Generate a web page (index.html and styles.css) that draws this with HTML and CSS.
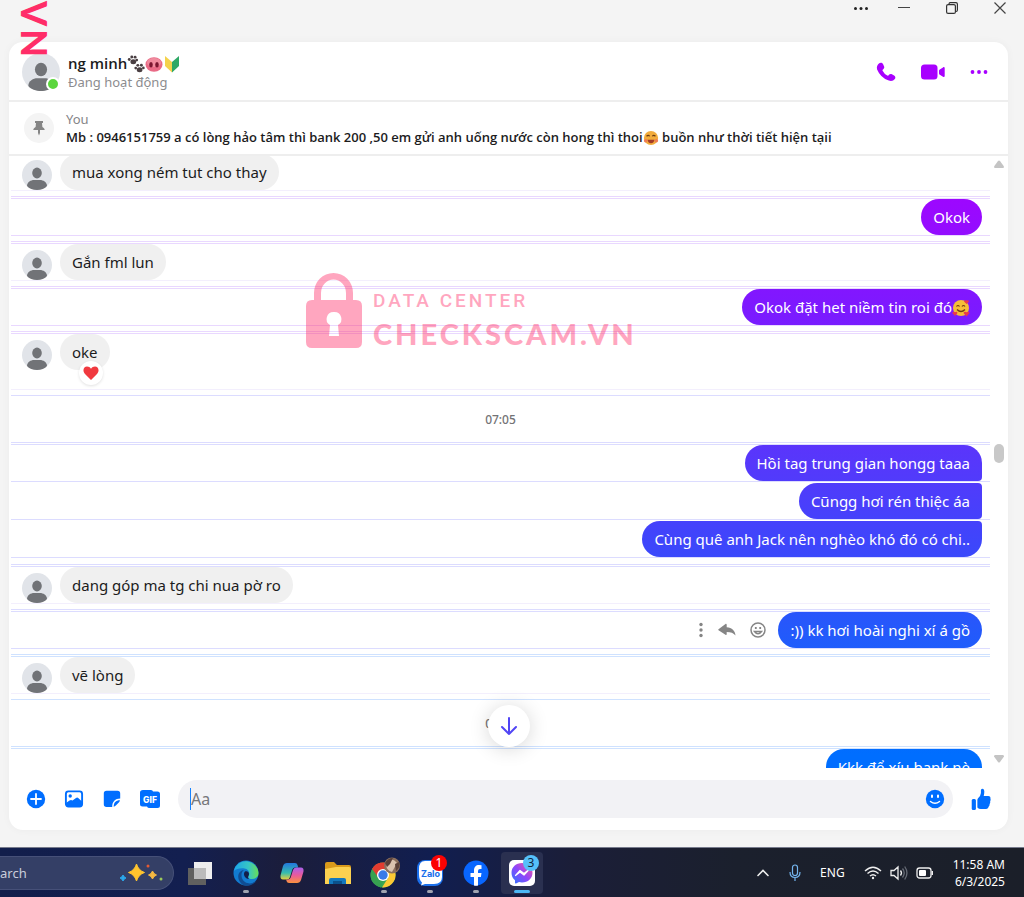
FILE: index.html
```html
<!DOCTYPE html>
<html lang="vi">
<head>
    <meta charset="utf-8">
    <meta name="viewport" content="width=device-width, initial-scale=1.0">
    <title>Messenger</title>
    <link rel="stylesheet" href="styles.css">
</head>
<body>
    <svg class="sprite" aria-hidden="true">
        <symbol id="person" viewBox="0 0 30 30">
            <circle cx="15" cy="15" r="15" fill="#e1e4e9"/>
            <ellipse cx="15" cy="13" rx="4.8" ry="5.4" fill="#717377"/>
            <path d="M5 26c0-4 4-6 7-6h6c3 0 7 2 7 6-2 2.500-6 4-10 4s-8-1.500-10-4z" fill="#717377"/>
        </symbol>
        <symbol id="paw" viewBox="0 0 20 20">
            <g fill="#4a3f42">
                <ellipse cx="7" cy="7.500" rx="3.200" ry="2.800"/><circle cx="2.500" cy="5" r="1.600"/><circle cx="5.300" cy="2.200" r="1.600"/><circle cx="9" cy="2.400" r="1.600"/><circle cx="10.800" cy="5.600" r="1.500"/>
                <ellipse cx="14" cy="16.500" rx="3.200" ry="2.800"/><circle cx="9.700" cy="14.500" r="1.500"/><circle cx="12" cy="11.500" r="1.600"/><circle cx="16" cy="11.400" r="1.600"/><circle cx="18.200" cy="14.400" r="1.500"/>
            </g>
        </symbol>
    </svg>

    <div class="titlebar">
        <button class="menu" aria-label="More"><svg width="16" height="16" viewBox="0 0 16 16" fill="#222"><circle cx="2.500" cy="8.500" r="1.500"/><circle cx="8" cy="8.500" r="1.500"/><circle cx="13.500" cy="8.500" r="1.500"/></svg></button>
        <button aria-label="Minimize"><svg width="12" height="16" viewBox="0 0 12 16" stroke="#444"><path d="M0 7.500h12"/></svg></button>
        <button aria-label="Restore"><svg width="12" height="16" viewBox="0 0 12 16" fill="none" stroke="#333" stroke-width="1.200"><rect x=".6" y="4.600" width="8.800" height="8.800" rx="1.500"/><path d="M3 4.500V4a1.500 1.500 0 0 1 1-1.400h6A1.500 1.500 0 0 1 11.400 4v6a1.500 1.500 0 0 1-1.400 1.500"/></svg></button>
        <button aria-label="Close"><svg width="12" height="16" viewBox="0 0 12 16" stroke="#444" stroke-width="1.200"><path d="M.5 2.500l11 11M11.500 2.500l-11 11"/></svg></button>
    </div>

    <main class="chat">
        <header class="chat-header">
            <div class="contact-avatar">
                <svg width="38" height="38"><use href="#person"/></svg>
                <span class="online"></span>
            </div>
            <div class="contact">
                <h1>ng minh<svg class="emoji" width="18" height="18"><use href="#paw"/></svg><svg class="emoji" width="18" height="18" viewBox="0 0 18 18"><ellipse cx="9" cy="9.500" rx="8.500" ry="7.300" fill="#e96a86"/><ellipse cx="9" cy="7.500" rx="7" ry="4.500" fill="#f08b9e"/><ellipse cx="6" cy="9.700" rx="1.800" ry="2.800" fill="#7b1630"/><ellipse cx="12" cy="9.700" rx="1.800" ry="2.800" fill="#7b1630"/></svg><svg class="emoji" width="18" height="18" viewBox="0 0 18 18"><path d="M2 1l7 6v10.500L2 11z" fill="#f4d24c"/><path d="M16 1L9 7v10.500l7-6.500z" fill="#2fa866"/></svg></h1>
                <p>Đang hoạt động</p>
            </div>
            <div class="header-actions">
                <button aria-label="Call"><svg width="20" height="20" viewBox="0 0 20 20"><path d="M3.200 1.300C4.500.4 6.200.7 7 2l1 2.200c.5 1 .3 1.900-.5 2.700l-.8.8c-.3.300-.3.700-.1 1.100a11 11 0 0 0 4.700 4.800c.4.200.8.100 1.100-.2l.8-.9c.8-.7 1.700-.8 2.700-.3l2.200 1.200c1.400.8 1.700 2.500.7 3.700-1.400 1.800-3.600 2.300-6 1.500A20 20 0 0 1 1.100 7.400C.4 5 1.300 2.600 3.200 1.300z" fill="#a800ff"/></svg></button>
                <button aria-label="Video call"><svg width="24" height="20" viewBox="0 0 24 20" fill="#a800ff"><rect x="0" y="2.500" width="16.500" height="15" rx="3.500"/><path d="M18 8.800c0-.6.300-1 .8-1.400l3.200-2c.9-.6 1.700-.2 1.700.7v8c0 .9-.8 1.300-1.700.7l-3.200-2c-.5-.4-.8-.8-.8-1.400z"/></svg></button>
                <button aria-label="Conversation information"><svg width="18" height="20" viewBox="0 0 18 20" fill="#a800ff"><circle cx="2.500" cy="10" r="1.900"/><circle cx="9" cy="10" r="1.900"/><circle cx="15.500" cy="10" r="1.900"/></svg></button>
            </div>
        </header>

        <section class="pinned">
            <span class="pin"><svg width="12" height="16" viewBox="0 0 12 16"><path d="M2 1h8v2H9l.4 4C11 8 11.700 9 11.700 10H7v3l-1 2.500L5 13v-3H.3c0-1 .7-2 2.300-3L3 3H2z" fill="#858585"/></svg></span>
            <div>
                <p class="pinned-by">You</p>
                <p class="pinned-text">Mb : 0946151759 a có lòng hảo tâm thì bank 200 ,50 em gửi anh uống nước còn hong thì thoi<svg class="emoji" width="16" height="16" viewBox="0 0 18 18"><circle cx="9" cy="9" r="8" fill="#f2ac3c"/><path d="M4 7q2-2 3.500 0M10.500 7Q12 5 14 7" stroke="#6b3b12" stroke-width="1.300" fill="none"/><path d="M5 11h8q-1 4-4 4t-4-4z" fill="#a33b27"/><circle cx="3" cy="12" r="2" fill="#ee7b54"/><circle cx="15" cy="12" r="2" fill="#ee7b54"/></svg> buồn như thời tiết hiện tạii</p>
            </div>
        </section>

        <div class="thread">
            <div class="messages">
                <div class="group purple">
                    <div class="row in"><svg class="avatar"><use href="#person"/></svg><p class="bubble">mua xong ném tut cho thay</p></div>
                </div>
                <div class="group purple">
                    <div class="row out"><p class="bubble">Okok</p></div>
                </div>
                <div class="group purple">
                    <div class="row in"><svg class="avatar"><use href="#person"/></svg><p class="bubble">Gắn fml lun</p></div>
                </div>
                <div class="group purple">
                    <div class="row out"><p class="bubble">Okok đặt het niềm tin roi đó<svg class="emoji" width="18" height="18" viewBox="0 0 18 18"><circle cx="9" cy="9" r="8" fill="#f6bd38"/><path d="M4.500 7.500q1.500-2 3 0M10 7.500q1.500-2 3 0" stroke="#713c12" stroke-width="1.200" fill="none"/><path d="M5 10.500q4 4 8 0" stroke="#713c12" stroke-width="1.300" fill="none"/><path d="M14.500 5l-2.500-2.500q.5-2 2.500-1 2-1 2.500 1zM3 17l-2.700-3q.5-2 2.700-.8 2-1.200 2.500.8zM14.500 17.500l-3-3.500q.8-2 3-.8 2.500-1.200 3 .8z" fill="#e83a4c"/></svg></p></div>
                </div>
                <div class="group purple">
                    <div class="row in reacted"><svg class="avatar"><use href="#person"/></svg>
                        <p class="bubble">oke<span class="reaction"><svg width="16" height="16" viewBox="0 0 16 16"><path d="M8 15L2 9C-1 5.500.8 1.500 4 1.500c1.800 0 3 .8 4 2.300 1-1.500 2.200-2.300 4-2.300 3.200 0 5 4 2 7.500z" fill="#f0393f"/></svg></span></p>
                    </div>
                </div>
                <div class="time violet"><time>07:05</time></div>
                <div class="group violet stacked">
                    <div class="row out"><p class="bubble">Hồi tag trung gian hongg taaa</p></div>
                    <div class="row out"><p class="bubble">Cũngg hơi rén thiệc áa</p></div>
                    <div class="row out"><p class="bubble">Cùng quê anh Jack nên nghèo khó đó có chi..</p></div>
                </div>
                <div class="group violet">
                    <div class="row in"><svg class="avatar"><use href="#person"/></svg><p class="bubble">dang góp ma tg chi nua pờ ro</p></div>
                </div>
                <div class="group violet">
                    <div class="row out">
                        <div class="row-actions">
                            <button aria-label="More"><svg width="6" height="18" viewBox="0 0 6 18" fill="#858585"><circle cx="3" cy="3.500" r="1.700"/><circle cx="3" cy="9" r="1.700"/><circle cx="3" cy="14.500" r="1.700"/></svg></button>
                            <button aria-label="Reply"><svg width="18" height="18" viewBox="0 0 18 18" fill="#858585"><path d="M.5 8.200L7.500 3c.6-.4 1.200 0 1.200.7v2.600c5.300.4 8.500 3.500 8.800 8.200-2-2.500-4.600-3.500-8.800-3.500v2.200c0 .8-.6 1.100-1.200.6L.5 9.200a.7.7 0 0 1 0-1z"/></svg></button>
                            <button aria-label="React"><svg width="16" height="18" viewBox="0 0 16 18" fill="none" stroke="#858585" stroke-width="1.500"><circle cx="8" cy="9" r="7"/><path d="M4.500 10.500q3.500 4.500 7 0z"/><path d="M5.800 6v2M10.200 6v2" stroke-width="1.800"/></svg></button>
                        </div>
                        <p class="bubble">:)) kk hơi hoài nghi xí á gồ</p>
                    </div>
                </div>
                <div class="group blue">
                    <div class="row in"><svg class="avatar"><use href="#person"/></svg><p class="bubble">vẽ lòng</p></div>
                </div>
                <div class="time blue"><time>07:06</time></div>
                <div class="group blue">
                    <div class="row out"><p class="bubble">Kkk để xíu bank nè</p></div>
                </div>
            </div>
            <div class="scrollbar" aria-hidden="true">
                <svg width="10" height="8" viewBox="0 0 10 8"><path d="M4 1q1-1 2 0l4 5.500q0 1.500-1 1.500H1Q0 8 0 6.500z" fill="#c4c4c4"/></svg>
                <div class="track"><span class="thumb"></span></div>
                <svg width="10" height="8" viewBox="0 0 10 8"><path d="M4 7q1 1 2 0l4-5.500Q10 0 9 0H1Q0 0 0 1.500z" fill="#c4c4c4"/></svg>
            </div>
            <button class="jump" aria-label="Scroll to bottom"><svg width="20" height="20" viewBox="0 0 20 20" fill="none" stroke="#5145f5" stroke-width="2" stroke-linecap="round" stroke-linejoin="round"><path d="M10 2v16M3 11l7 7 7-7"/></svg></button>
        </div>

        <form class="composer">
            <button type="button" aria-label="Open more actions"><svg width="20" height="20" viewBox="0 0 20 20"><circle cx="10" cy="10" r="9.200" fill="#006eff"/><path d="M10 5v10M5 10h10" stroke="#fff" stroke-width="1.800" stroke-linecap="round"/></svg></button>
            <button type="button" aria-label="Attach a photo"><svg width="20" height="20" viewBox="0 0 20 20"><rect x="1.900" y="2.400" width="16.200" height="15.200" rx="2.500" fill="#fff" stroke="#006eff" stroke-width="1.900"/><circle cx="6.200" cy="7" r="1.700" fill="#006eff"/><path d="M2 14l3.500-2.500q1.500-1 3 0L12 9q1.200-1 2.500.2L18 12.500V16q0 1.500-1.500 1.500h-13Q2 17.500 2 16z" fill="#006eff"/></svg></button>
            <button type="button" aria-label="Choose a sticker"><svg width="20" height="20" viewBox="0 0 20 20" fill="#006eff"><path d="M4.500 1.800h11q2.700 0 2.700 2.700V9.500c-5 0-8 3-8 8.500H4.500q-2.700 0-2.700-2.700V4.500q0-2.700 2.700-2.700z"/><path d="M18 11.300q-.3 1.200-1.200 2.200l-3 3q-.9.900-2.100 1.200c0-4.200 2-6.400 6.300-6.400z"/></svg></button>
            <button type="button" aria-label="Choose a GIF"><svg width="20" height="20" viewBox="0 0 20 20"><path d="M3 1h8q1.800 0 2 1.500h4.500Q20 2.500 20 5v11.500q0 2.500-2.500 2.500H9.500q-2 0-2.500-1.500H2.500Q0 17.500 0 15V3.500Q0 1 3 1z" fill="#006eff"/><text x="10" y="13.500" text-anchor="middle" font-family="Inter, sans-serif" font-size="8.500" font-weight="800" fill="#fff">GIF</text></svg></button>
            <div class="message-box">
                <span class="caret"></span>
                <input type="text" placeholder="Aa" aria-label="Message">
                <button type="button" aria-label="Choose an emoji"><svg width="20" height="20" viewBox="0 0 20 20"><circle cx="10" cy="10" r="9.200" fill="#006eff"/><path d="M7 6.500v1.500M13 6.500v1.500" stroke="#fff" stroke-width="2" stroke-linecap="round"/><path d="M5.500 12.500q4.500 3.500 9 0" stroke="#fff" stroke-width="1.500" fill="none" stroke-linecap="round"/></svg></button>
            </div>
            <button type="button" aria-label="Send a like"><svg width="20" height="22" viewBox="0 0 22 22" preserveAspectRatio="none" fill="#006eff"><rect x=".8" y="11" width="4.600" height="11" rx="1.500"/><path d="M7 12q0-1.200 1-2 2.700-2.500 2.900-5V2.300Q11 .8 12.300.8c2 0 2.700 2 2.200 4.700L14 8h5q2.700.2 2.400 2.500.6 1.500-.3 2.700.4 1.700-.6 2.800.1 1.700-1 2.600-.4 2.400-2.700 2.400h-6Q8.500 21 7 19.500z"/></svg></button>
        </form>

        <div class="watermark">
            <svg width="58" height="78" viewBox="0 0 58 78"><path d="M9 27V20a19.500 20 0 0 1 39 0v7h-7v-7a12.500 13.500 0 0 0-25 0v7zM7 27h44q6 0 6 6v36q0 6-6 6H7q-6 0-6-6V33q0-6 6-6zm22 12a7 7 0 0 0-4 13l-1 11h10l-1-11a7 7 0 0 0-4-13z" fill="#ff2d68" fill-rule="evenodd"/></svg>
            <div class="wm-text">
                <p class="wm-small">DATA CENTER</p>
                <p class="wm-big">CHECKSCAM.VN</p>
            </div>
        </div>
    </main>

    <div class="side-mark">VN</div>

    <footer class="taskbar">
        <div class="search">
            <input type="text" placeholder="arch" aria-label="Search">
            <svg width="44" height="20" viewBox="0 0 44 20"><path d="M17.500 1q2 6.500 8 8.500-6 2-8 8.500-2-6.500-8-8.500 6-2 8-8.500z" fill="#ffc42e" stroke="#ffc42e" stroke-linejoin="round"/><path d="M33.500 8q1 3 4 4-3 1-4 4-1-3-4-4 3-1 4-4z" fill="#f5b942" stroke="#f5b942" stroke-linejoin="round"/><path d="M4 12q1 2.500 3 3-2 .5-3 3-1-2.500-3-3 2-.5 3-3z" fill="#2ba8ec" stroke="#2ba8ec"/><circle cx="29" cy="3" r="1.500" fill="#e45a32"/><circle cx="42" cy="16" r="1.500" fill="#9bc95b"/></svg>
        </div>
        <nav class="apps">
            <button aria-label="Task view"><svg width="26" height="26" viewBox="0 0 26 26"><rect x="1" y="8" width="18" height="17" fill="#60605f"/><rect x="7" y="2" width="18" height="17" fill="#eee"/><path d="M7 8h12v11H7z" fill="#bbb"/></svg></button>
            <button class="open" aria-label="Edge"><svg width="26" height="26" viewBox="0 0 26 26"><defs><linearGradient id="edgeTop"><stop offset="0" stop-color="#1ca5e8"/><stop offset=".6" stop-color="#37c6c4"/><stop offset="1" stop-color="#69dd55"/></linearGradient></defs><circle cx="13" cy="13" r="12.500" fill="#127bd1"/><path d="M.8 11A12.500 12.500 0 0 1 25.500 13c0 4-3 6-6.500 6-3 0-4.500-1.500-3.500-3 2-3 0-7-4-7.500C7 8 3 9 .8 11z" fill="url(#edgeTop)"/><path d="M11 10c-4 3-3 9 1 12 4 2.500 8 1.500 11.500-1A12.500 12.500 0 0 1 10 25C3 20 4 11 11 10z" fill="#104d94"/><path d="M12 11.500c2-1 4 .5 4 2.500s-2 3 0 5c-4 0-6.500-5-4-7.500z" fill="#121e49"/></svg></button>
            <button aria-label="Copilot"><svg width="26" height="26" viewBox="0 0 26 26"><defs><linearGradient id="coA" x2="0" y2="1"><stop offset="0" stop-color="#2277dd"/><stop offset=".6" stop-color="#36bdae"/><stop offset="1" stop-color="#e8ce3e"/></linearGradient><linearGradient id="coB" x2="0" y2="1"><stop offset="0" stop-color="#a960ec"/><stop offset=".5" stop-color="#e95a9c"/><stop offset="1" stop-color="#fa923e"/></linearGradient></defs><path d="M8 3h8q2 0 2.500 2l.7 2.500H16q-2 0-2.700 2L11 17q-.8 2.500-3 2.500H4q-3 0-2.500-4L4 6q1-3 4-3z" fill="url(#coA)"/><path d="M18 23h-8q-2 0-2.500-2l-.3-1.500H9q2 0 2.700-2L14 10q.8-2.500 3-2.500h5q3 0 2.500 4L22 20q-1 3-4 3z" fill="url(#coB)"/></svg></button>
            <button aria-label="File Explorer"><svg width="26" height="26" viewBox="0 0 26 26"><path d="M0 4q0-2 2-2h7l3 3h12q2 0 2 2v5H0z" fill="#d99a1b"/><path d="M0 9l11-2h13q2 0 2 2v15H0z" fill="#fbd150"/><path d="M4 24v-4q0-2 2-2h13q2 0 2 2v4z" fill="#1378be"/><path d="M8 21h9v3H8z" fill="#0b518c"/></svg></button>
            <button class="open" aria-label="Chrome"><svg width="32" height="32" viewBox="0 0 32 32"><circle cx="15" cy="18" r="12.500" fill="#3ba653"/><path d="M4.200 12A12.500 12.500 0 0 1 26 12H15z" fill="#e23c30"/><path d="M4.200 12L10 21l5 3-2 6.400A12.500 12.500 0 0 1 4.200 12z" fill="#37a151"/><path d="M26 12a12.500 12.500 0 0 1-12 18.500L20 21l-1-9z" fill="#fcc934"/><path d="M4.200 12q3-5 8-6.300h7L15 12l-5 8z" fill="#e23c30"/><circle cx="15" cy="18" r="6" fill="#fff"/><circle cx="15" cy="18" r="4.700" fill="#3a7be8"/><circle cx="24" cy="8.500" r="8" fill="#8c705e"/><path d="M18 6q6-7 11 0l-5 9q-6-1-6-9z" fill="#d9c1ae"/><path d="M17 6q3-5 8-5l-3 6-3 3zM27 7l4-2q2 5-3 9z" fill="#593f38"/></svg></button>
            <button class="open" aria-label="Zalo"><svg width="26" height="26" viewBox="0 0 26 26"><rect width="26" height="26" rx="8" fill="#1b70ec"/><path d="M8 1h10q7 0 7 7v9q0 7-8 7H8l-4 1.500 1-3Q2 20 2 14V9q0-8 6-8z" fill="#fff"/><text x="13.500" y="17" text-anchor="middle" font-family="Inter, sans-serif" font-size="9" font-weight="700" fill="#176deb">Zalo</text></svg><span class="badge red">1</span></button>
            <button class="open" aria-label="Facebook"><svg width="26" height="26" viewBox="0 0 26 26"><circle cx="13" cy="13" r="12.500" fill="#0866ff"/><path d="M11 25.500V17H7.500v-4H11v-2.500C11 7 13 5 16 5q1.500 0 2.500.3V9H17q-2 0-2 2v2h3.500l-.6 4H15v8.500q-2 .4-4 0z" fill="#fff"/></svg></button>
            <button class="open active" aria-label="Messenger"><svg width="26" height="26" viewBox="0 0 26 26"><defs><linearGradient id="msg" x1="0" y1="1" x2="1" y2="0"><stop offset="0" stop-color="#2877ff"/><stop offset=".5" stop-color="#9045fa"/><stop offset="1" stop-color="#ff5a90"/></linearGradient></defs><rect width="26" height="26" rx="5" fill="#fff"/><path d="M13 3c6 0 10.500 4 10.500 9.700S19 22.500 13 22.500q-1.700 0-3-.4L7 23.500q-1 .3-1-.7v-2.500q-3.500-3-3.500-7.600C2.500 7 7 3 13 3z" fill="url(#msg)"/><path d="M6.500 15.500l4.500-5 4 3 4.500-3.500-4.500 5-4-3z" fill="#fff" stroke="#fff" stroke-width="1.200" stroke-linejoin="round"/></svg><span class="badge sky">3</span></button>
        </nav>
        <div class="tray">
            <button aria-label="Show hidden icons"><svg width="14" height="14" viewBox="0 0 14 14" fill="none" stroke="#eee" stroke-width="1.600" stroke-linecap="round"><path d="M2 9.500l5-5 5 5"/></svg></button>
            <button aria-label="Microphone"><svg width="12" height="18" viewBox="0 0 12 18" fill="none" stroke="#75b5ee" stroke-width="1.200"><rect x="3.500" y="1" width="5" height="10.500" rx="2.500"/><path d="M1 8q0 5.500 5 5.500T11 8M6 13.500V17"/></svg></button>
            <button class="lang">ENG</button>
            <button class="status" aria-label="Network, volume, battery">
                <svg width="18" height="16" viewBox="0 0 18 16" fill="none" stroke="#eee" stroke-width="1.400"><path d="M1 6q8-7.500 16 0M3.500 8.500q5.500-5 11 0M6 11q3-2.700 6 0"/><circle cx="9" cy="13" r="1.200" fill="#eee" stroke="none"/></svg>
                <svg width="18" height="16" viewBox="0 0 18 16" fill="none" stroke="#eee" stroke-width="1.300"><path d="M1 5.500h3L8 2v12l-4-3.500H1zM10.500 5.500q2 2.500 0 5"/><path d="M12.500 3.500q3.500 4.500 0 9M14.700 1.500q4.500 6.500 0 13" stroke="#666b75"/></svg>
                <svg width="18" height="16" viewBox="0 0 18 16"><rect x="1" y="3" width="14" height="10" rx="2.500" fill="none" stroke="#eee" stroke-width="1.300"/><rect x="3" y="5" width="7" height="6" rx="1" fill="#fff"/><path d="M15.500 6h1.500v4h-1.500z" fill="#eee"/></svg>
            </button>
            <div class="clock"><span>11:58 AM</span><span>6/3/2025</span></div>
        </div>
    </footer>
</body>
</html>
```
FILE: styles.css
```css
* {
    box-sizing: border-box;
}

body {
    margin: 0;
    height: 100vh;
    display: flex;
    flex-direction: column;
    overflow: hidden;
    background-color: #f4f4f4;
    color: #1c1c1d;
    font-family: "Noto Sans", "Open Sans", sans-serif;
    font-size: 15px;
}

h1, p {
    margin: 0;
}

button {
    display: flex;
    align-items: center;
    justify-content: center;
    padding: 0;
    border: none;
    background: none;
    font-family: inherit;
    cursor: pointer;
}

input {
    min-width: 0;
    padding: 0;
    border: none;
    outline: none;
    background: none;
    font-family: inherit;
}

svg {
    display: block;
    flex-shrink: 0;
}

.sprite {
    position: absolute;
    width: 0;
    height: 0;
}

.emoji {
    display: inline-block;
    vertical-align: -4px;
}

/* window buttons */
.titlebar {
    height: 42px;
    flex-shrink: 0;
    display: flex;
    justify-content: flex-end;
    align-items: flex-start;
    gap: 4px;
    padding-right: 2px;
}

.titlebar button {
    width: 44px;
    height: 16px;
}

.titlebar .menu {
    width: 34px;
}

/* chat card */
.chat {
    position: relative;
    flex: 1;
    min-height: 0;
    margin: 0 16px 17px 9px;
    display: flex;
    flex-direction: column;
    background-color: #fff;
    border-radius: 14px;
    box-shadow: 0 0 8px rgba(0, 0, 0, 0.04);
}

.chat-header {
    height: 60px;
    flex-shrink: 0;
    display: flex;
    align-items: center;
    gap: 8px;
    padding: 2px 20px 0 13px;
    border-bottom: 2px solid #eee;
}

.contact-avatar {
    position: relative;
}

.online {
    position: absolute;
    right: 0;
    bottom: 0;
    width: 14px;
    height: 14px;
    border: 2px solid #fff;
    border-radius: 50%;
    background-color: #5bd63d;
}

.contact {
    flex: 1;
}

.contact h1 {
    font-family: "Open Sans", "Noto Sans", sans-serif;
    font-size: 15px;
    line-height: 20px;
    font-weight: 600;
}

.contact p {
    font-size: 13px;
    line-height: 18px;
    color: #8c8c8f;
}

.header-actions {
    display: flex;
    align-items: center;
    gap: 25px;
}

.pinned {
    height: 54px;
    flex-shrink: 0;
    display: flex;
    align-items: center;
    gap: 12px;
    padding: 0 15px;
    border-bottom: 2px solid #eee;
}

.pin {
    width: 30px;
    height: 30px;
    display: flex;
    align-items: center;
    justify-content: center;
    border-radius: 50%;
    background-color: #f4f4f4;
}

.pinned-by {
    font-size: 13px;
    line-height: 18px;
    color: #858588;
}

.pinned-text {
    font-family: "Open Sans", "Noto Sans", sans-serif;
    font-size: 13px;
    line-height: 18px;
    font-weight: 600;
    white-space: nowrap;
}

/* message list */
.thread {
    position: relative;
    flex: 1;
    min-height: 0;
    display: flex;
    overflow: hidden;
}

.messages {
    flex: 1;
    margin-top: -5px;
    margin-left: 2px;
}

.purple { --line: #e9d8ff; }
.violet { --line: #dcdcff; }
.blue { --line: #cfe2ff; }

.group {
    padding-top: 1px;
    padding-bottom: 5px;
    border-top: 1px solid var(--line);
}

.row {
    display: flex;
    align-items: flex-end;
    padding: 0 8px 0 11px;
    border-top: 1px solid var(--line);
    border-bottom: 1px solid var(--line);
}

.row.in {
    gap: 8px;
    border-bottom-color: #f3effd;
}

.row.out {
    justify-content: flex-end;
    align-items: center;
}

.row.reacted {
    padding-bottom: 19px;
}

.stacked {
    padding-bottom: 6px;
}

.stacked .row + .row {
    margin-top: 1px;
    border-top: none;
}

.avatar {
    width: 30px;
    height: 30px;
}

.bubble {
    position: relative;
    padding: 8px 12px;
    border-radius: 18px;
    background-color: #f0f0f0;
    line-height: 20px;
    white-space: nowrap;
}

/* one gradient runs down the window behind every sent bubble */
.out .bubble {
    color: #fff;
    background: linear-gradient(#a800ff 160px, #980aff 217px, #7d19ff 307px, #5638fb 463px, #3f45fb 540px, #2459fb 631px, #006eff 755px) fixed;
}

.stacked .row:first-child .bubble {
    border-bottom-right-radius: 4px;
}

.stacked .row:nth-child(2) .bubble {
    border-top-right-radius: 4px;
    border-bottom-right-radius: 4px;
}

.stacked .row:last-child .bubble {
    border-top-right-radius: 4px;
}

.reaction {
    position: absolute;
    right: 7px;
    bottom: -15px;
    padding: 4px;
    border-radius: 50%;
    background-color: #fff;
    box-shadow: 0 1px 3px rgba(0, 0, 0, 0.12);
}

.row-actions {
    display: flex;
    gap: 14px;
    margin-right: 12px;
}

.time {
    height: 47px;
    display: flex;
    align-items: center;
    justify-content: center;
    border-top: 1px solid var(--line);
    font-size: 12px;
    font-weight: 500;
    color: #737376;
}

.scrollbar {
    width: 18px;
    display: flex;
    flex-direction: column;
    align-items: center;
    padding: 4px 0 5px;
}

.track {
    position: relative;
    flex: 1;
}

.thumb {
    position: absolute;
    top: 47%;
    left: -5px;
    width: 10px;
    height: 19px;
    border-radius: 5px;
    background-color: #c8c8c8;
}

.jump {
    position: absolute;
    bottom: 21px;
    left: 50%;
    width: 42px;
    height: 42px;
    margin-left: -21px;
    border-radius: 50%;
    background-color: #fff;
    box-shadow: 0 2px 20px rgba(0, 0, 0, 0.16);
}

/* composer */
.composer {
    height: 62px;
    flex-shrink: 0;
    display: flex;
    align-items: center;
    gap: 18px;
    padding: 0 17px;
}

.message-box {
    flex: 1;
    height: 38px;
    display: flex;
    align-items: center;
    padding: 0 8px 0 12px;
    border-radius: 19px;
    background-color: #f2f2f5;
}

.message-box input {
    flex: 1;
    font-size: 16px;
}

.message-box input::placeholder {
    color: #77777a;
    opacity: 1;
}

.caret {
    width: 1px;
    height: 22px;
    background-color: #1683ff;
}

/* watermarks lie over the conversation */
.watermark {
    position: absolute;
    top: 231px;
    left: 296px;
    display: flex;
    align-items: flex-start;
    gap: 10px;
    color: #ff2d68;
    opacity: 0.42;
    pointer-events: none;
}

.wm-text {
    padding-top: 16px;
}

.wm-small {
    margin-bottom: 3px;
    font: 500 19px/24px Roboto, sans-serif;
    letter-spacing: 3px;
}

.wm-big {
    font: 900 29px/36px Lato, sans-serif;
    letter-spacing: 3px;
}

.side-mark {
    position: absolute;
    top: 1px;
    left: 11px;
    writing-mode: vertical-rl;
    font: 900 36px/48px Lato, sans-serif;
    letter-spacing: 3px;
    color: #ff2d68;
    pointer-events: none;
}

/* taskbar */
.taskbar {
    height: 50px;
    flex-shrink: 0;
    display: flex;
    align-items: center;
    border-top: 1px solid #777b8c;
    background: linear-gradient(90deg, #121e4b, #131f50 18%, #1b1d3b 28%, #111e50 42%, #1b1e38 56%, #1b202d 72%, #1b1f29);
    color: #fff;
}

.search {
    width: 174px;
    height: 34px;
    display: flex;
    align-items: center;
    padding-right: 10px;
    border: 1px solid #465078;
    border-left: none;
    border-radius: 0 17px 17px 0;
    background-color: #343f66;
}

.search input {
    flex: 1;
    font-size: 13px;
    color: #fff;
}

.search input::placeholder {
    color: #c9cddb;
    opacity: 1;
}

.apps {
    display: flex;
    gap: 4px;
    margin-left: 5px;
}

.apps button {
    position: relative;
    width: 42px;
    height: 42px;
    border-radius: 4px;
}

.apps .active {
    background-color: #2a3050;
}

.open::after {
    content: "";
    position: absolute;
    bottom: 1px;
    width: 6px;
    height: 3px;
    border-radius: 2px;
    background-color: #a0a3b0;
}

.active::after {
    width: 16px;
    background-color: #4cb8f5;
}

.badge {
    position: absolute;
    top: 3px;
    right: 4px;
    width: 16px;
    height: 16px;
    border-radius: 50%;
    font-size: 12px;
    line-height: 16px;
    text-align: center;
}

.red {
    background-color: #fb0303;
    color: #fff;
}

.sky {
    background-color: #55c0fa;
    color: #12243a;
}

.tray {
    display: flex;
    align-items: center;
    gap: 19px;
    margin-left: auto;
    padding-right: 19px;
}

.lang {
    color: #fff;
    font-size: 12px;
}

.status {
    gap: 8px;
}

.clock {
    display: flex;
    flex-direction: column;
    align-items: flex-end;
    font-size: 12px;
    line-height: 17px;
}
```
